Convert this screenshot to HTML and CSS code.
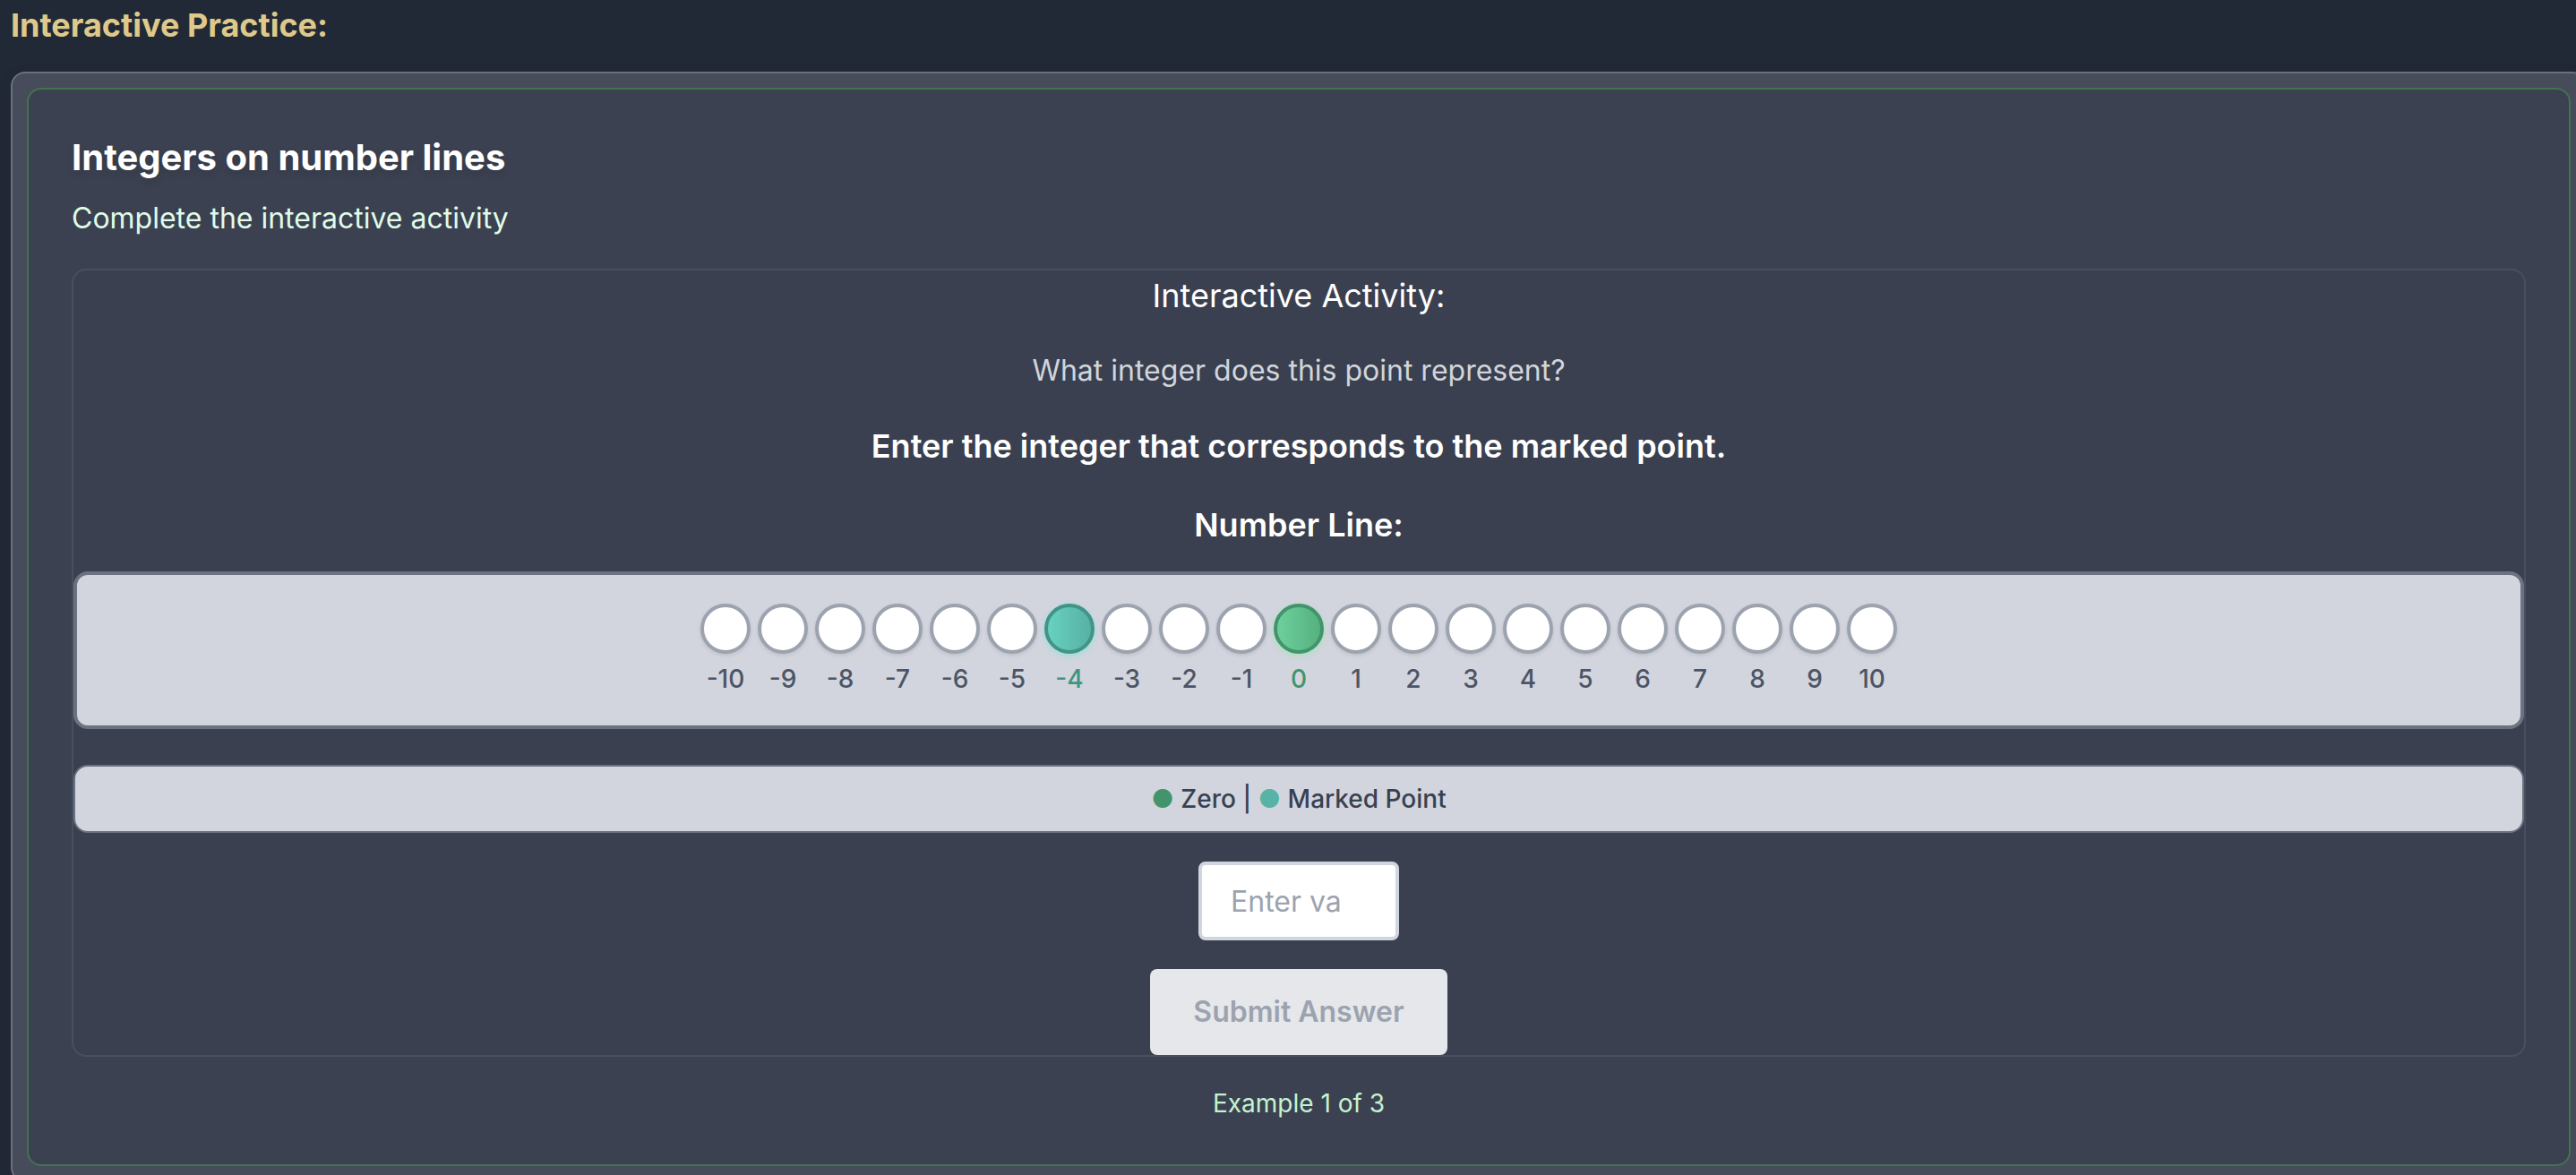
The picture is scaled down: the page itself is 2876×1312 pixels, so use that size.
FILE: index.html
```html
<!DOCTYPE html>
<html lang="en">
<head>
<meta charset="utf-8">
<meta name="viewport" content="width=device-width, initial-scale=1">
<title>Interactive Practice</title>
<link rel="stylesheet" href="styles.css">
</head>
<body>
<main class="page">
  <h2 class="page-title">Interactive Practice:</h2>
  <section class="shell">
    <article class="card">
      <h3 class="card-title">Integers on number lines</h3>
      <p class="card-subtitle">Complete the interactive activity</p>
      <form class="activity">
        <div class="prompts">
          <p class="activity-title">Interactive Activity:</p>
          <p class="question">What integer does this point represent?</p>
          <p class="instruction">Enter the integer that corresponds to the marked point.</p>
          <h4 class="instruction">Number Line:</h4>
        </div>
        <ol class="number-line">
          <li class="tick"><span class="dot"></span>-10</li>
          <li class="tick"><span class="dot"></span>-9</li>
          <li class="tick"><span class="dot"></span>-8</li>
          <li class="tick"><span class="dot"></span>-7</li>
          <li class="tick"><span class="dot"></span>-6</li>
          <li class="tick"><span class="dot"></span>-5</li>
          <li class="tick tick-marked"><span class="dot"></span>-4</li>
          <li class="tick"><span class="dot"></span>-3</li>
          <li class="tick"><span class="dot"></span>-2</li>
          <li class="tick"><span class="dot"></span>-1</li>
          <li class="tick tick-zero"><span class="dot"></span>0</li>
          <li class="tick"><span class="dot"></span>1</li>
          <li class="tick"><span class="dot"></span>2</li>
          <li class="tick"><span class="dot"></span>3</li>
          <li class="tick"><span class="dot"></span>4</li>
          <li class="tick"><span class="dot"></span>5</li>
          <li class="tick"><span class="dot"></span>6</li>
          <li class="tick"><span class="dot"></span>7</li>
          <li class="tick"><span class="dot"></span>8</li>
          <li class="tick"><span class="dot"></span>9</li>
          <li class="tick"><span class="dot"></span>10</li>
        </ol>
        <p class="legend"><span class="key-zero">●</span> Zero | <span class="key-marked">●</span> Marked Point</p>
        <div class="answer">
          <input class="answer-input" type="number" placeholder="Enter value" aria-label="Your answer">
          <button class="submit" type="submit" disabled>Submit Answer</button>
        </div>
      </form>
      <p class="progress">Example 1 of 3</p>
    </article>
  </section>
</main>
</body>
</html>
```
FILE: styles.css
```css
* {
  box-sizing: border-box;
}

body,
h2,
h3,
h4,
p,
ol {
  margin: 0;
  padding: 0;
}

body {
  background: #222936;
  color: #ffffff;
  font-family: Inter, "Liberation Sans", sans-serif;
}

.page {
  height: 100vh;
  padding-left: 12px;
  overflow: hidden;
}

.page-title {
  margin-bottom: 24px;
  color: #dfc98a;
  font-size: 36px;
  font-weight: 700;
  line-height: 56px;
}

/* The shell runs past the right edge by the width of the page gutter. */
.shell {
  margin-right: -12px;
  padding: 16px;
  border: 2px solid #6b707b;
  border-radius: 16px;
  background: #464c59;
  box-shadow: 0 8px 24px rgba(0, 0, 0, 0.06);
}

.card {
  padding: 48px;
  border: 2px solid #427351;
  border-radius: 16px;
  background: #3b4150;
}

.card-title {
  margin-bottom: 16px;
  font-size: 40px;
  font-weight: 700;
  line-height: 56px;
  text-shadow: 0 4px 8px rgba(0, 0, 0, 0.12);
}

.card-subtitle {
  margin-bottom: 32px;
  color: #e0fbe8;
  font-size: 32px;
  line-height: 48px;
}

.activity {
  border: 2px solid #485060;
  border-radius: 16px;
  background: #3a404f;
  text-align: center;
}

.prompts {
  display: flex;
  flex-direction: column;
  gap: 32px;
  margin-bottom: 24px;
}

.activity-title,
.instruction {
  font-size: 36px;
  line-height: 56px;
}

.instruction {
  font-weight: 600;
}

.activity-title {
  font-weight: 400;
}

.question {
  color: #d1d5db;
  font-size: 32px;
  line-height: 48px;
}

.number-line {
  display: flex;
  justify-content: center;
  gap: 8px;
  margin-bottom: 40px;
  padding: 32px;
  border: 4px solid #6b7280;
  border-radius: 16px;
  background: #d2d5dd;
  list-style: none;
}

.tick {
  display: flex;
  flex-direction: column;
  align-items: center;
  gap: 8px;
  width: 56px;
  color: #4b5567;
  font-size: 28px;
  font-weight: 500;
  line-height: 40px;
}

.dot {
  width: 56px;
  height: 56px;
  border: 4px solid #9ca3af;
  border-radius: 50%;
  background: #ffffff;
  box-shadow: 0 2px 4px rgba(0, 0, 0, 0.1);
}

.tick-marked {
  color: #3f9585;
}

.tick-marked .dot {
  border-color: #419488;
  background: linear-gradient(90deg, #68d1bf, #56b1a4);
  box-shadow: 0 2px 6px rgba(129, 230, 217, 0.8);
}

.tick-zero {
  color: #43946c;
}

.tick-zero .dot {
  border-color: #43946c;
  background: linear-gradient(90deg, #6dd09c, #56b17f);
  box-shadow: 0 2px 6px rgba(154, 230, 180, 0.8);
}

.legend {
  padding: 16px;
  border: 2px solid #6b7280;
  border-radius: 16px;
  background: #d2d5dd;
  color: #384152;
  font-size: 28px;
  font-weight: 500;
  line-height: 40px;
}

.key-zero {
  color: #43946c;
}

.key-marked {
  color: #56b3a6;
}

.answer {
  display: flex;
  flex-direction: column;
  align-items: center;
  gap: 32px;
  margin-top: 32px;
}

.answer-input {
  width: 224px;
  height: 88px;
  padding: 0 44px 0 32px;
  border: 4px solid #d1d5dd;
  border-radius: 8px;
  background: #ffffff;
  color: #1f2937;
  font: 400 32px/48px Inter, "Liberation Sans", sans-serif;
}

.answer-input::placeholder {
  color: #9ca3af;
  opacity: 1;
}

.submit {
  height: 96px;
  padding: 0 48px;
  border: 0;
  border-radius: 8px;
  background: #e5e7eb;
  color: #9ca3af;
  font: 600 32px/48px Inter, "Liberation Sans", sans-serif;
}

.progress {
  margin-top: 32px;
  color: #c3f3d1;
  font-size: 28px;
  line-height: 40px;
  text-align: center;
}
```
